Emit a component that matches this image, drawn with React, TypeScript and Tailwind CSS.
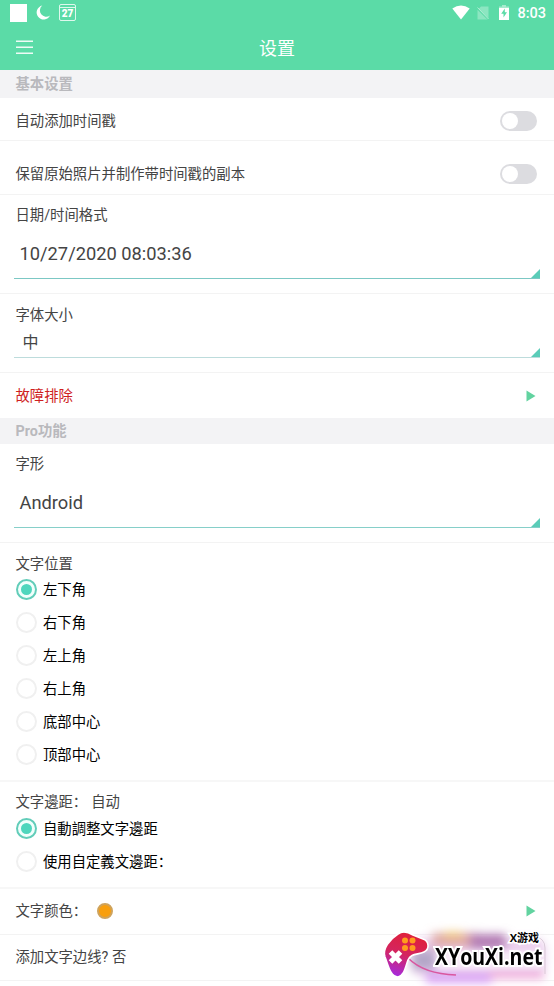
import React, { useState } from "react";
import { clsx } from "clsx";

const positions = ["左下角", "右下角", "左上角", "右上角", "底部中心", "顶部中心"];
const margins = ["自動調整文字邊距", "使用自定義文邊距："];

function StatusBar() {
  return (
    <div className="flex h-[25px] items-center justify-between pl-[10px] pr-[8px]">
      <div className="flex items-center">
        <div className="h-[18px] w-[17px] bg-white" />
        <svg className="ml-[9px]" width="15" height="15" viewBox="0 0 15 15">
          <path d="M6.3.6A7 7 0 1 0 14 10.4 6.2 6.2 0 0 1 6.3.6Z" fill="#fff" />
        </svg>
        <div className="ml-[8px] flex h-[17px] w-[17px] flex-col rounded-[2px] border border-white/80">
          <div className="h-[4px] border-b border-white/80" />
          <span className="text-center font-[Roboto] text-[10px] leading-[12px] font-black text-white">27</span>
        </div>
      </div>
      <div className="flex items-center">
        <svg width="18" height="15" viewBox="0 0 18 15">
          <path d="M.3 3.4Q9-2.6 17.7 3.4L9 14.6Z" fill="#fff" />
        </svg>
        <svg className="ml-[7px]" width="12" height="14" viewBox="0 0 12 14">
          <path d="M4 .5H11.5V13.5H.5V4Z" fill="#fff" opacity=".3" />
          <path d="M0 2 12 14" stroke="#5bdba7" strokeWidth="1.6" />
          <path d="M.5 1.5 11.5 13" stroke="#fff" strokeWidth="1" opacity=".5" />
        </svg>
        <svg className="ml-[10px]" width="10" height="15" viewBox="0 0 10 15">
          <path d="M3 0H7V1.5H10V3.5H0V1.5H3Z" fill="#fff" opacity=".45" />
          <path d="M0 3H10V15H0Z" fill="#fff" />
          <path d="M5.8 3.6 2.2 8.8H4.5V12.4L8 7.2H5.8Z" fill="#5bdba7" />
        </svg>
        <span className="ml-[8px] pt-[3px] font-[Roboto] text-[14.5px] leading-none font-medium text-white">8:03</span>
      </div>
    </div>
  );
}

function Section({ title, className }: { title: string; className: string }) {
  return (
    <div className={clsx("flex items-center bg-[#f3f3f5] pt-[2px] pl-[15.5px] font-bold text-[#b9b9bd]", className)}>
      {title}
    </div>
  );
}

function Switch() {
  const [on, setOn] = useState(false);
  return (
    <button
      onClick={() => setOn(!on)}
      className={clsx("-mt-[2px] flex h-[20px] w-[37px] items-center rounded-full px-[2px]", on ? "justify-end bg-[#5bdba7]" : "bg-[#dcdce0]")}
    >
      <span className="h-[16px] w-[16px] rounded-full bg-white" />
    </button>
  );
}

function Arrow() {
  return (
    <svg className="-mt-[2px]" width="10" height="12" viewBox="0 0 10 12">
      <path d="M.5.5 9.5 6 .5 11.5Z" fill="#62d3a0" />
    </svg>
  );
}

function Spinner({ value, className, line }: { value: string; className: string; line: string }) {
  return (
    <div className={clsx("mx-[14px] flex items-end justify-between border-b", line)}>
      <span className={clsx("text-[#444]", className)}>{value}</span>
      <svg width="9" height="9" viewBox="0 0 9 9">
        <path d="M9 0V9H0Z" fill="#5accb8" />
      </svg>
    </div>
  );
}

function Radios({ items }: { items: string[] }) {
  const [selected, setSelected] = useState(0);
  return (
    <div className="-mt-px">
      {items.map((item, i) => (
        <div key={item} onClick={() => setSelected(i)} className="flex h-[33px] items-center gap-[6px] pl-[16px] text-black">
          <span
            className={clsx(
              "flex h-[21px] w-[21px] items-center justify-center rounded-full border-2",
              selected === i ? "border-[#62cdb9] bg-[#f1fffc]" : "border-[#f0f0f0]"
            )}
          >
            {selected === i && <span className="h-[11px] w-[11px] rounded-full bg-[#4fd6bd]" />}
          </span>
          <span className="pt-[2px]">{item}</span>
        </div>
      ))}
    </div>
  );
}

function Watermark() {
  return (
    <div className="absolute right-0 bottom-0 h-[66px] w-[180px] overflow-hidden">
      <svg width="180" height="66" viewBox="0 -6 180 66">
        <defs>
          <linearGradient id="pad" x1="0.6" y1="0" x2="0.3" y2="1">
            <stop offset="0" stopColor="#e02038" />
            <stop offset=".5" stopColor="#d42560" />
            <stop offset="1" stopColor="#a52ae0" />
          </linearGradient>
          <filter id="soft" x="-30%" y="-60%" width="160%" height="220%">
            <feGaussianBlur stdDeviation="5" />
          </filter>
          <filter id="glow" x="-30%" y="-60%" width="160%" height="220%">
            <feGaussianBlur stdDeviation="2.5" />
          </filter>
        </defs>
        <g filter="url(#soft)">
          <rect x="36" y="12" width="136" height="38" rx="12" fill="#ecd0ee" />
          <rect x="58" y="7" width="46" height="14" fill="#dfa9a6" />
          <rect x="70" y="6" width="18" height="6" fill="#f2c878" />
          <rect x="96" y="8" width="36" height="15" fill="#b27ab4" />
          <rect x="38" y="24" width="24" height="20" fill="#b3a6c8" />
          <rect x="52" y="47" width="66" height="10" fill="#d9a0f5" />
          <rect x="116" y="45" width="54" height="8" fill="#f0aedb" />
        </g>
        <rect x="62" y="25" width="106" height="18" fill="#fff" opacity=".6" filter="url(#glow)" />
        <path d="M160 10Q171 12 171 22V48" fill="none" stroke="#b9a8b8" strokeWidth=".8" opacity=".6" />
        <path d="M34 32Q50 48 82 49" fill="none" stroke="#d957a0" strokeWidth="1.6" />
        <path
          d="M24 8C28 5 34 6 39 9L49 13C55 15 56 23 50 26C44 29 37 27 34 34C31 42 30 50 24 51C16 51 14 38 11 31C8 23 16 13 24 8Z"
          fill="url(#pad)"
          stroke="#fff"
          strokeWidth="1.6"
        />
        <g fill="#ff9d1e">
          <circle cx="31" cy="14.5" r="3" />
          <circle cx="38.5" cy="14.5" r="3" />
          <circle cx="31" cy="22" r="3" />
          <circle cx="38.5" cy="22" r="3" />
        </g>
        <path d="M16.5 26 26.5 36M26.5 26 16.5 36" stroke="#fff" strokeWidth="5" />
      </svg>
      <span className="absolute top-[24px] right-[11.5px] origin-right scale-x-[0.83] font-['Open_Sans',sans-serif] text-[23.5px] leading-[24px] font-bold text-black [-webkit-text-stroke:4px_white] [paint-order:stroke_fill]">
        XYouXi.net
      </span>
      <span className="absolute top-[12px] right-[15px] font-['Open_Sans','Noto_Sans_CJK_SC',sans-serif] text-[11px] leading-[12px] font-bold text-black [-webkit-text-stroke:3px_white] [paint-order:stroke_fill]">
        X游戏
      </span>
    </div>
  );
}

export default function App() {
  return (
    <div className="relative h-[986px] w-[554px] overflow-hidden bg-white font-[Roboto,'Noto_Sans_CJK_SC',sans-serif] text-[14.35px] leading-[20px] text-[#444]">
      <header className="h-[70px] bg-[#5bdba7]">
        <StatusBar />
        <div className="grid h-[45px] grid-cols-3 items-center px-[16px]">
          <svg width="17" height="15" viewBox="0 0 17 15">
            <path d="M0 1.3H17M0 7.3H17M0 13.3H17" stroke="#fff" strokeWidth="1.5" opacity=".9" />
          </svg>
          <h1 className="pt-[2px] text-center text-[18px] text-white">设置</h1>
        </div>
      </header>

      <Section title="基本设置" className="h-[28px]" />
      <div className="flex h-[43px] items-center justify-between border-b border-[#f3f3f3] pt-[5px] pr-[17px] pl-[15.5px]">
        自动添加时间戳
        <Switch />
      </div>
      <div className="flex h-[54px] items-center justify-between border-b border-[#f3f3f3] pt-[15px] pr-[17px] pl-[15.5px]">
        保留原始照片并制作带时间戳的副本
        <Switch />
      </div>
      <div className="h-[99px] border-b border-[#f3f3f3] pt-[11px]">
        <p className="pl-[15.5px]">日期/时间格式</p>
        <Spinner value="10/27/2020 08:03:36" className="pt-[4px] pl-[5.5px] text-[18.3px] leading-[48px]" line="border-[#7cc8c4]" />
      </div>
      <div className="h-[79px] border-b border-[#f3f3f3] pt-[12px]">
        <p className="pl-[15.5px]">字体大小</p>
        <Spinner value="中" className="pt-[3px] pl-[8.5px] text-[16px] leading-[28px]" line="border-[#bddcdc]" />
      </div>
      <div className="flex h-[45px] items-center justify-between pt-[2px] pr-[18px] pl-[15.5px] text-[#cf1f1f]">
        故障排除
        <Arrow />
      </div>

      <Section title="Pro功能" className="h-[26px]" />
      <div className="h-[99px] border-b border-[#f3f3f3] pt-[11px]">
        <p className="pl-[15.5px]">字形</p>
        <Spinner value="Android" className="pt-[4px] pl-[5.5px] text-[18.3px] leading-[48px]" line="border-[#86cfc9]" />
      </div>
      <div className="h-[239px] border-b-2 border-[#f7f7f7] pt-[11px]">
        <p className="relative top-px pl-[15.5px]">文字位置</p>
        <Radios items={positions} />
      </div>
      <div className="h-[107px] border-b-2 border-[#f7f7f7] pt-[11px]">
        <p className="flex gap-[4px] pl-[15.5px]">
          <span>文字邊距：</span>
          <span>自动</span>
        </p>
        <Radios items={margins} />
      </div>
      <div className="flex h-[46px] items-center justify-between border-b border-[#f3f3f3] pt-px pr-[18px] pl-[15.5px]">
        <div className="flex items-center gap-[10px]">
          文字颜色：
          <span className="-mt-[2px] h-[16px] w-[16px] rounded-full border-2 border-[#cfa35c] bg-[#f89f0e]" />
        </div>
        <Arrow />
      </div>
      <div className="flex h-[46px] items-center border-b border-[#f3f3f3] pt-px pl-[15.5px]">添加文字边线? 否</div>
      <Watermark />
    </div>
  );
}
